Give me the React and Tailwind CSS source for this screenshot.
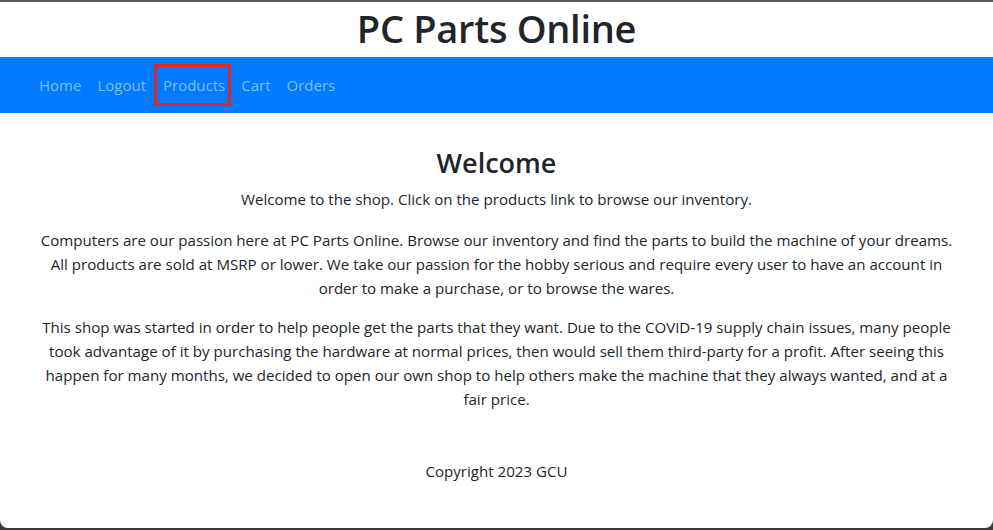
import React from "react";

export default function App() {
  return (
    <div className="w-[993px] h-[530px] bg-[#3a3a3a] overflow-hidden">
      <div className="h-[528px] bg-white rounded-b-[8px] border-t-2 border-[#5a5a5a] flex flex-col text-[#212529] font-['Open_Sans',sans-serif]">
        <div className="h-[55px] flex items-start justify-center">
          <h1 className="text-[38px] leading-[48px] font-semibold mt-[2px] tracking-[-0.3px]">PC Parts Online</h1>
        </div>
        <nav className="h-[56px] bg-[#007bff] flex items-center px-[31px]">
          {["Home", "Logout", "Products", "Cart", "Orders"].map((l) => (
            <div
              key={l}
              className={
                l === "Products"
                  ? "pl-[6px] pr-[3px] mr-[2px] py-[6px] border-[3px] border-[#e3242b] text-[15px] text-[#80bdff] leading-[24px]"
                  : "px-[8px] py-[8px] text-[15px] text-[#80bdff] leading-[24px]"
              }
            >
              {l}
            </div>
          ))}
        </nav>
        <main className="flex flex-col items-center text-center px-[37px] text-[15.1px] leading-[24px]">
          <h2 className="text-[27px] leading-[36px] font-semibold mt-[32px]">Welcome</h2>
          <p className="mt-[6px]">Welcome to the shop. Click on the products link to browse our inventory.</p>
          <p className="mt-[17px]">
            Computers are our passion here at PC Parts Online. Browse our inventory and find the parts to build the machine of your dreams. All products are sold at MSRP or lower. We take our passion for the hobby serious and require every user to have an account in order to make a purchase, or to browse the wares.
          </p>
          <p className="mt-[15px]">
            This shop was started in order to help people get the parts that they want. Due to the COVID-19 supply chain issues, many people took advantage of it by purchasing the hardware at normal prices, then would sell them third-party for a profit. After seeing this happen for many months, we decided to open our own shop to help others make the machine that they always wanted, and at a fair price.
          </p>
          <p className="mt-[48px]">Copyright 2023 GCU</p>
        </main>
      </div>
    </div>
  );
}
